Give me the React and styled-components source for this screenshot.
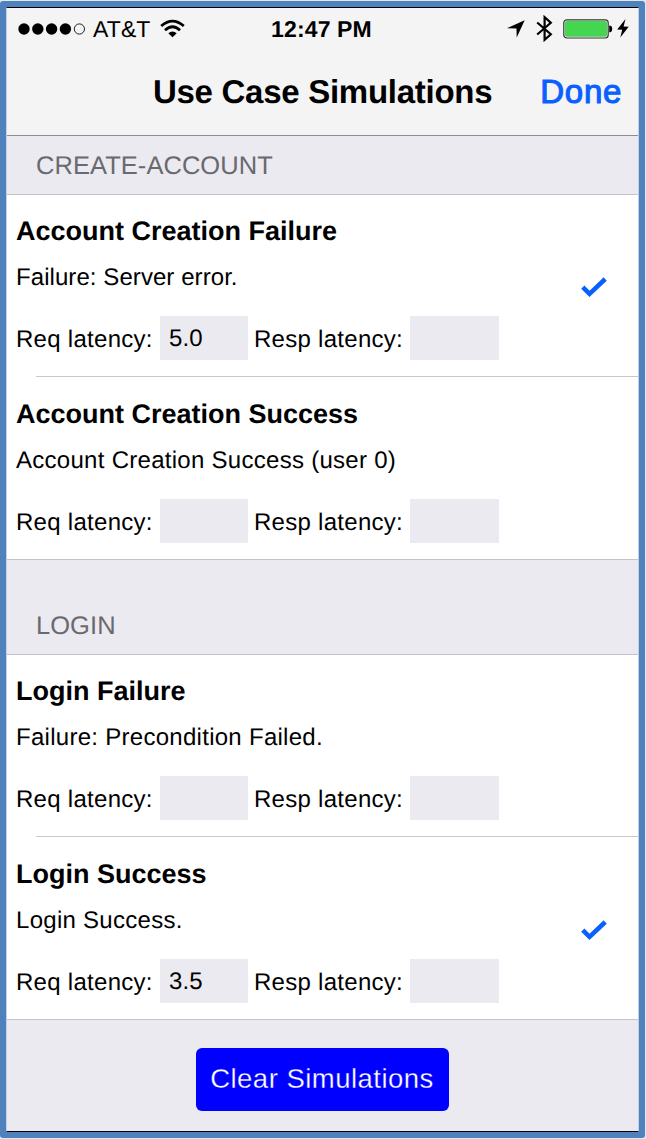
import React from 'react';
import styled, { createGlobalStyle } from 'styled-components';

const Global = createGlobalStyle`
  * { box-sizing: border-box; }
  body {
    margin: 0;
    background: #dfe9f3;
    font-family: "Liberation Sans", Arial, sans-serif;
    color: #000;
    text-rendering: geometricPrecision;
  }
`;

const Frame = styled.div`
  width: 645px;
  height: 1137px;
  margin-top: 1px;
  border: 6px solid #4f81bd;
  border-radius: 3px;
  background: #4f81bd;
`;

const Screen = styled.main`
  display: flex;
  flex-direction: column;
  height: 1125px;
  border: 1px solid #c3d1e4;
  border-top-color: #000;
  border-bottom-color: #000;
  background: #ebeaf0;
`;

const Header = styled.header`
  height: 128px;
  flex: none;
  background: #f4f4f4;
  border-bottom: 1px solid #8e8d92;
`;

const StatusBar = styled.div`
  display: grid;
  grid-template-columns: 264px auto 1fr;
  align-items: center;
  height: 41px;
  padding: 0 9px 0 0;
  font-size: 23px;
  line-height: 28px;
`;

const StatusGroup = styled.div`
  display: flex;
  align-items: center;
  justify-content: ${(p) => (p.$end ? 'flex-end' : 'flex-start')};
  padding-left: ${(p) => (p.$end ? 0 : 11)}px;
`;

const Carrier = styled.span`
  margin: 0 10px 0 7px;
  letter-spacing: 0.1px;
`;

const Time = styled.span`
  font-weight: bold;
  letter-spacing: 0.15px;
`;

const NavBar = styled.div`
  display: flex;
  align-items: center;
  justify-content: flex-end;
  height: 85px;
  padding: 0 16px 0 0;
  font-size: 33px;
  line-height: 40px;
`;

const NavTitle = styled.h1`
  margin: 0 48px 0 0;
  font-size: inherit;
  font-weight: bold;
  letter-spacing: -0.27px;
`;

const DoneButton = styled.button`
  padding: 0;
  border: 0;
  background: none;
  font: inherit;
  color: #0a60ff;
  letter-spacing: 0.7px;
  -webkit-text-stroke: 1.1px #0a60ff;
`;

const SectionHeader = styled.h2`
  display: flex;
  align-items: flex-end;
  flex: none;
  height: ${(p) => (p.$first ? 59 : 95)}px;
  margin: 0;
  padding: 0 0 13px 29px;
  border-bottom: 1px solid #c4c3c9;
  font-size: 25.5px;
  font-weight: normal;
  line-height: 30px;
  letter-spacing: 0.05px;
  color: #69696e;
`;

const List = styled.div`
  flex: none;
  background: #fff;
  border-bottom: 1px solid #c4c3c9;
`;

const Row = styled.section`
  display: flex;
  align-items: center;
  justify-content: space-between;
  height: 181px;
  padding: 0 31px 0 9px;
`;

const Separator = styled.div`
  height: 1px;
  margin-left: 29px;
  background: #c8c7cc;

  & + ${Row} { height: 182px; padding-top: 1px; }
`;

const RowBody = styled.div`
  align-self: stretch;
  padding-top: 18px;
`;

const RowTitle = styled.h3`
  margin: 0;
  font-size: 27px;
  line-height: 37px;
`;

const Description = styled.p`
  margin: 12px 0 22px;
  font-size: 24px;
  line-height: 32px;
  letter-spacing: ${(p) => (p.$tight ? 0.07 : 0.28)}px;
`;

const Fields = styled.div`
  display: grid;
  grid-template-columns: 144px 88px 162px 89px;
  grid-template-rows: 43.5px;
  font-size: 24px;
`;

const Label = styled.label`
  padding-left: ${(p) => (p.$inset ? 6 : 0)}px;
  line-height: 48px;
  letter-spacing: 0.28px;
  white-space: nowrap;
`;

const Field = styled.div`
  padding-left: 9px;
  background: #ebeaf0;
  line-height: 45px;
  letter-spacing: 0.1px;
`;

const Footer = styled.footer`
  display: flex;
  justify-content: center;
  padding: 27.5px 0 0;
`;

const ClearButton = styled.button`
  width: 253px;
  height: 63.5px;
  padding: 0 1px 2px 0;
  border: 0;
  border-radius: 6px;
  background: #00f;
  color: #fff;
  font: 27.5px/61px "Liberation Sans", Arial, sans-serif;
  letter-spacing: 0.48px;
  -webkit-text-stroke: 0.3px #00f;
`;

const Signal = () => (
  <svg width="68" height="12" viewBox="0 0 68 12">
    {[6, 19.8, 33.6, 47.4].map((x) => <circle key={x} cx={x} cy="6" r="5.7" />)}
    <circle cx="61.4" cy="6" r="5.1" fill="none" stroke="#222" strokeWidth="1" />
  </svg>
);

const Wifi = () => (
  <svg width="25" height="19" viewBox="0 0 25 19" fill="none" stroke="#000" strokeWidth="2.8">
    <path d="M1.2 7Q12.5-2.8 23.8 7" />
    <path d="M5 11.2Q12.5 4.4 20 11.2" />
    <path d="M8.3 14.2Q12.5 10.8 16.7 14.2L12.5 18.3Z" fill="#000" stroke="none" />
  </svg>
);

const Location = () => (
  <svg width="18" height="18" viewBox="0 0 18 18">
    <path d="M17.7 0.2L9.7 17.6L9.5 8.5L0 8.2Z" />
  </svg>
);

const Bluetooth = () => (
  <svg width="17" height="27" viewBox="0 0 17 27" fill="none" stroke="#000" strokeWidth="2.2">
    <path d="M1.2 7.5L14.8 19.2L8.6 24.8V2.2L14.8 7.8L1.2 19.5" />
  </svg>
);

const Battery = () => (
  <svg width="50" height="20" viewBox="0 0 50 20">
    <rect x="0.8" y="0.8" width="44.4" height="18.2" rx="3" fill="#f4f4f4" stroke="#333" strokeWidth="1.2" />
    <rect x="2" y="2" width="42" height="15.8" rx="1.8" fill="#44d551" />
    <path d="M46.2 6.5Q49.2 6.5 49.2 9.9T46.2 13.3Z" />
  </svg>
);

const Bolt = () => (
  <svg width="12" height="19" viewBox="0 0 12 19">
    <path d="M8.5 0L0.2 10.4L5.2 10.7L3.3 18.6L11.7 7.8L6.6 7.6Z" />
  </svg>
);

const Check = () => (
  <svg width="26" height="21" viewBox="0 0 26 21" fill="none" stroke="#0a60ff" strokeWidth="4.6">
    <path d="M1.8 10.2L8.5 16.8L24.2 2" />
  </svg>
);

const IconSlot = styled.span`
  display: flex;
  margin-left: ${(p) => p.$gap}px;
`;

const CheckSlot = styled.span`
  display: flex;
  padding-top: 3px;
`;

function Simulation({ title, description, latency, selected, tight }) {
  return (
    <Row>
      <RowBody>
        <RowTitle>{title}</RowTitle>
        <Description $tight={tight}>{description}</Description>
        <Fields>
          <Label>Req latency:</Label>
          <Field>{latency}</Field>
          <Label $inset>Resp latency:</Label>
          <Field />
        </Fields>
      </RowBody>
      {selected && <CheckSlot><Check /></CheckSlot>}
    </Row>
  );
}

export default function App() {
  return (
    <>
      <Global />
      <Frame>
        <Screen>
          <Header>
            <StatusBar>
              <StatusGroup>
                <Signal />
                <Carrier>AT&amp;T</Carrier>
                <Wifi />
              </StatusGroup>
              <Time>12:47 PM</Time>
              <StatusGroup $end>
                <Location />
                <IconSlot $gap={11}><Bluetooth /></IconSlot>
                <IconSlot $gap={10}><Battery /></IconSlot>
                <IconSlot $gap={4}><Bolt /></IconSlot>
              </StatusGroup>
            </StatusBar>
            <NavBar>
              <NavTitle>Use Case Simulations</NavTitle>
              <DoneButton>Done</DoneButton>
            </NavBar>
          </Header>

          <SectionHeader $first>CREATE-ACCOUNT</SectionHeader>
          <List>
            <Simulation title="Account Creation Failure" description="Failure: Server error." latency="5.0" selected tight />
            <Separator />
            <Simulation title="Account Creation Success" description="Account Creation Success (user 0)" />
          </List>

          <SectionHeader>LOGIN</SectionHeader>
          <List>
            <Simulation title="Login Failure" description="Failure: Precondition Failed." />
            <Separator />
            <Simulation title="Login Success" description="Login Success." latency="3.5" selected />
          </List>

          <Footer>
            <ClearButton>Clear Simulations</ClearButton>
          </Footer>
        </Screen>
      </Frame>
    </>
  );
}
